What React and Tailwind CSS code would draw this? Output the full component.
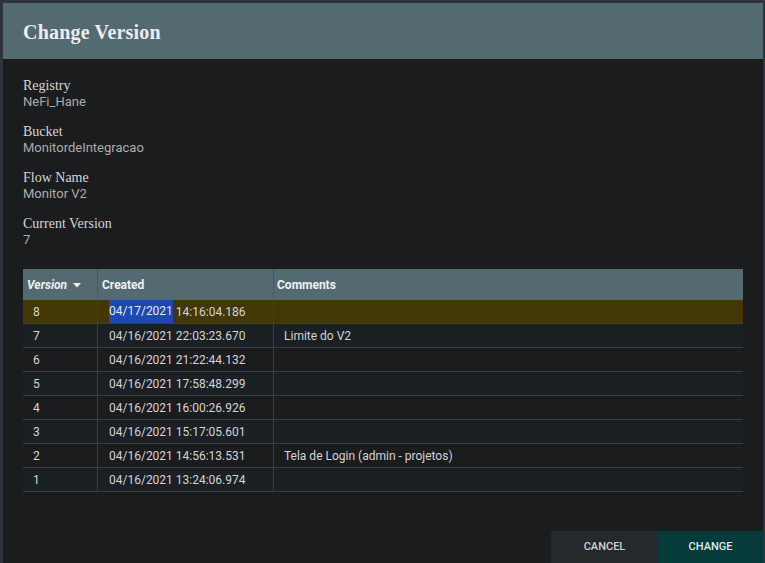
import React from 'react';

const rows = [
  { v: '8', created: '04/17/2021 14:16:04.186', comment: '', selected: true },
  { v: '7', created: '04/16/2021 22:03:23.670', comment: 'Limite do V2' },
  { v: '6', created: '04/16/2021 21:22:44.132', comment: '' },
  { v: '5', created: '04/16/2021 17:58:48.299', comment: '' },
  { v: '4', created: '04/16/2021 16:00:26.926', comment: '' },
  { v: '3', created: '04/16/2021 15:17:05.601', comment: '' },
  { v: '2', created: '04/16/2021 14:56:13.531', comment: 'Tela de Login (admin - projetos)' },
  { v: '1', created: '04/16/2021 13:24:06.974', comment: '' },
];

const details = [
  ['Registry', 'NeFi_Hane'],
  ['Bucket', 'MonitordeIntegracao'],
  ['Flow Name', 'Monitor V2'],
  ['Current Version', '7'],
];

export default function App() {
  return (
    <div className="w-[765px] h-[563px] bg-[#2d343b] pt-[3px] pl-[3px] overflow-hidden font-['Roboto',sans-serif]">
      <div className="w-[760px] h-[560px] bg-[#1b1c1e] flex flex-col">
        {/* Header */}
        <div className="h-[56px] bg-[#536a71] flex items-center px-5 shrink-0">
          <h1 className="font-['Liberation_Serif',serif] font-bold text-[20px] text-[#ececec] tracking-[0.2px] mt-[1px]">
            Change Version
          </h1>
        </div>

        {/* Body */}
        <div className="flex-1 px-5 pt-[19px]">
          {details.map(([label, value]) => (
            <div key={label} className="mb-[14px] last:mb-0">
              <div className="font-['Liberation_Serif',serif] text-[14px] leading-4 text-[#d6d6d6]">{label}</div>
              <div className="text-[13px] leading-4 text-[#acacac]">{value}</div>
            </div>
          ))}

          <div className="mt-[21px] w-[720px] text-[12px]">
            <div className="grid grid-cols-[75px_176px_1fr] h-[31px] bg-[#536a71] text-[#eef2f3] font-bold">
              <div className="flex items-center pl-1 border-r border-[#48595e] italic">
                Version
                <svg width="8" height="5" viewBox="0 0 8 5" className="ml-[6px] mt-[2px]">
                  <path d="M0 0h8L4 4.5z" fill="#eef2f3" />
                </svg>
              </div>
              <div className="flex items-center pl-1 border-r border-[#48595e]">Created</div>
              <div className="flex items-center pl-[3px]">Comments</div>
            </div>
            {rows.map((r, i) => (
              <div
                key={r.v}
                className={
                  'grid grid-cols-[75px_176px_1fr] h-[24px] border-b border-[#3b3f43] text-[#d4d4d4] ' +
                  (r.selected ? 'bg-[#433805]' : i % 2 === 1 ? 'bg-[#1a2024]' : 'bg-[#1b1c1e]')
                }
              >
                <div className="flex items-center pl-[10px] border-r border-[#3b3f43]">{r.v}</div>
                <div className="flex items-center pl-[11px] border-r border-[#3b3f43]">
                  {r.selected ? (
                    <>
                      <span className="bg-[#1c48b0] text-[#e4e8f0] leading-[23px]">04/17/2021</span>
                      <span className="pl-[3px]">14:16:04.186</span>
                    </>
                  ) : (
                    r.created
                  )}
                </div>
                <div className="flex items-center pl-[10px]">{r.comment}</div>
              </div>
            ))}
          </div>
        </div>

        {/* Footer */}
        <div className="flex justify-end shrink-0">
          <button className="w-[107px] h-[32px] bg-[#26292b] text-[#cfd3d4] text-[11px] font-medium uppercase">
            Cancel
          </button>
          <button className="w-[105px] h-[32px] bg-[#063b3a] text-[#dfe9e8] text-[11px] font-medium uppercase">
            Change
          </button>
        </div>
      </div>
    </div>
  );
}
